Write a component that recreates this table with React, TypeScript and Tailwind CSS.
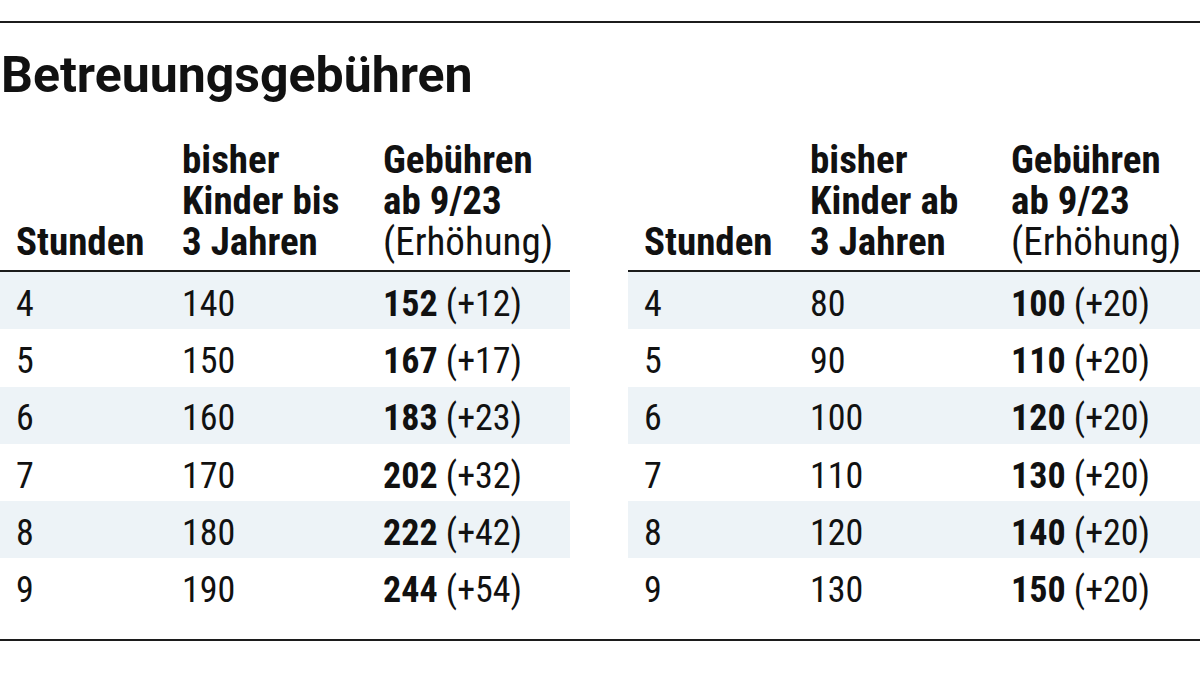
const narrow = "font-['Liberation_Sans_Narrow','Arial_Narrow','Roboto_Condensed',sans-serif]";

type Row = { h: string; prev: string; next: string; inc: string };

const under3: Row[] = [
  { h: "4", prev: "140", next: "152", inc: "(+12)" },
  { h: "5", prev: "150", next: "167", inc: "(+17)" },
  { h: "6", prev: "160", next: "183", inc: "(+23)" },
  { h: "7", prev: "170", next: "202", inc: "(+32)" },
  { h: "8", prev: "180", next: "222", inc: "(+42)" },
  { h: "9", prev: "190", next: "244", inc: "(+54)" },
];

const over3: Row[] = [
  { h: "4", prev: "80", next: "100", inc: "(+20)" },
  { h: "5", prev: "90", next: "110", inc: "(+20)" },
  { h: "6", prev: "100", next: "120", inc: "(+20)" },
  { h: "7", prev: "110", next: "130", inc: "(+20)" },
  { h: "8", prev: "120", next: "140", inc: "(+20)" },
  { h: "9", prev: "130", next: "150", inc: "(+20)" },
];

function FeeTable({ label, rows, className }: { label: string; rows: Row[]; className?: string }) {
  return (
    <div className={className}>
      <div className="grid grid-cols-[166px_201px_1fr] items-end border-b-2 border-[#1c1c1c] pb-[7px] pl-[16px] text-[39px] leading-[41px] font-bold text-[#111]">
        <div>Stunden</div>
        <div className="flex flex-col">
          <span>bisher</span>
          <span>Kinder {label}</span>
          <span>3 Jahren</span>
        </div>
        <div className="flex flex-col">
          <span>Gebühren</span>
          <span>ab 9/23</span>
          <span className="font-normal">(Erhöhung)</span>
        </div>
      </div>
      {rows.map((row, i) => (
        <div
          key={row.h}
          className={`grid h-[57.3px] grid-cols-[166px_201px_1fr] items-center pl-[16px] pt-[6px] text-[36px] leading-none text-[#111] ${
            i % 2 === 0 ? "bg-[#edf3f7]" : "bg-white"
          }`}
        >
          <div>{row.h}</div>
          <div>{row.prev}</div>
          <div>
            <span className="font-bold">{row.next}</span> <span>{row.inc}</span>
          </div>
        </div>
      ))}
    </div>
  );
}

export default function App() {
  return (
    <div className={`h-[675px] w-[1200px] overflow-hidden bg-white pt-[21px] ${narrow}`}>
      <div className="h-[2px] bg-[#1c1c1c]" />
      <h1 className="mt-[27px] pl-[1px] font-['Roboto',sans-serif] text-[50px] font-bold leading-[50px] text-[#111]">
        Betreuungsgebühren
      </h1>
      <div className="mt-[40px] flex gap-[58px]">
        <FeeTable label="bis" rows={under3} className="w-[570px]" />
        <FeeTable label="ab" rows={over3} className="flex-1" />
      </div>
      <div className="mt-[23px] h-[2px] bg-[#1c1c1c]" />
    </div>
  );
}
